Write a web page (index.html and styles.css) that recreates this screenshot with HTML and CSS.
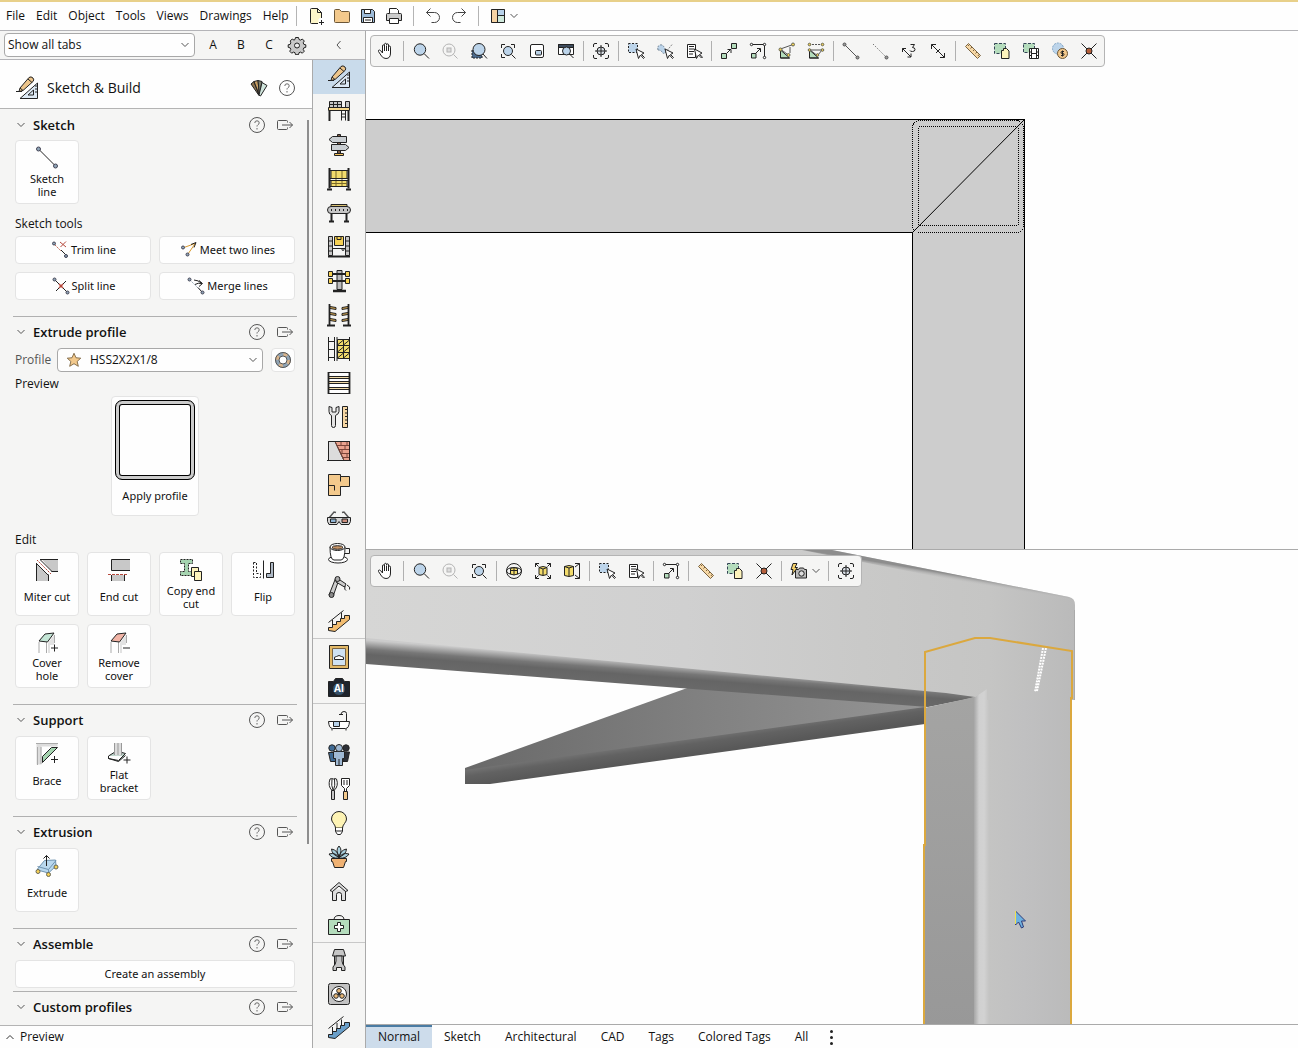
FILE: index.html
```html
<!DOCTYPE html>
<html lang="en">
<head>
<meta charset="utf-8">
<meta name="viewport" content="width=device-width, initial-scale=1">
<title>Sketch &amp; Build</title>
<link rel="stylesheet" href="styles.css">
</head>
<body>
<svg class="sprite" aria-hidden="true">
  <defs>
    <linearGradient id="g-front" gradientUnits="userSpaceOnUse" x1="366" y1="0" x2="1075" y2="0"><stop offset="0" stop-color="#d6d6d5"/><stop offset=".45" stop-color="#d0d0d0"/><stop offset=".7" stop-color="#c9c9c8"/><stop offset=".88" stop-color="#c5c5c4"/><stop offset="1" stop-color="#bababa"/></linearGradient>
    <linearGradient id="g-under" gradientUnits="userSpaceOnUse" x1="600" y1="658" x2="598" y2="684"><stop offset="0" stop-color="#cbcbcb"/><stop offset=".35" stop-color="#777"/><stop offset=".55" stop-color="#656565"/><stop offset="1" stop-color="#6a6a6a"/></linearGradient>
    <linearGradient id="g-top" gradientUnits="userSpaceOnUse" x1="950" y1="574" x2="949" y2="580"><stop offset="0" stop-color="#8d8d8d"/><stop offset="1" stop-color="#c6c6c6" stop-opacity="0"/></linearGradient>
    <linearGradient id="g-back" gradientUnits="userSpaceOnUse" x1="465" y1="0" x2="925" y2="0"><stop offset="0" stop-color="#696969"/><stop offset=".5" stop-color="#808080"/><stop offset="1" stop-color="#949494"/></linearGradient>
    <linearGradient id="g-backlow" gradientUnits="userSpaceOnUse" x1="700" y1="732" x2="703" y2="753"><stop offset="0" stop-color="#7e7e7e"/><stop offset=".5" stop-color="#626262"/><stop offset="1" stop-color="#585858"/></linearGradient>
    <linearGradient id="g-post" gradientUnits="userSpaceOnUse" x1="974" y1="0" x2="1075" y2="0"><stop offset="0" stop-color="#a6a6a6"/><stop offset=".05" stop-color="#d0d0d0"/><stop offset=".1" stop-color="#d2d2d2"/><stop offset=".15" stop-color="#c4c4c3"/><stop offset=".5" stop-color="#c0c0c1"/><stop offset="1" stop-color="#bababa"/></linearGradient>
    <linearGradient id="g-side" x1="0" y1="0" x2="0" y2="1"><stop offset="0" stop-color="#a4a4a3"/><stop offset="1" stop-color="#989898"/></linearGradient>
  </defs>

  <symbol id="new" viewBox="0 0 20 20"><path d="M5 3h6.500l4 4v4l-3 2v4.500H5z" fill="#fdf6c8" stroke="none"/><path d="M12 17.500H5.500q-1 0-1-1v-13q0-1 1-1h6l4 4V12M11.500 2.500v4h4M15.500 14v5M13 16.500h5"/></symbol>
  <symbol id="open" viewBox="0 0 20 20"><path d="M2.500 4.500q0-1 1-1h4l2 2h7q1 0 1 1v9q0 1-1 1h-13q-1 0-1-1z" fill="#f3c98c" stroke="#6b5637"/></symbol>
  <symbol id="save" viewBox="0 0 20 20"><path d="M3.500 3.500h11l2 2v11h-13z" fill="#9dbbd8"/><path d="M6.500 3.500h6v4h-6zM5.500 11.500h9v5h-9z" fill="#fff"/><path d="M7 14h6"/></symbol>
  <symbol id="print" viewBox="0 0 20 20"><path d="M2.500 8.500q0-1 1-1h13q1 0 1 1v6h-15z" fill="#ccc"/><path d="M5.500 7.500v-5h7l2 2v3M5.500 12.500h9v5h-9z" fill="#fff"/></symbol>
  <symbol id="undo" viewBox="0 0 20 20"><path d="M7.500 2.500l-4 4 4 4M3.500 6.500h8a5 5 0 0 1 0 10h-3" stroke="#444"/></symbol>
  <symbol id="redo" viewBox="0 0 20 20"><path d="M12.500 2.500l4 4-4 4M16.500 6.500h-8a5 5 0 0 0 0 10h3" stroke="#444"/></symbol>
  <symbol id="layout" viewBox="0 0 20 20"><path d="M3.500 3.500h6v13h-6z" fill="#f6d3a4"/><path d="M9.500 3.500h7v6h-7z" fill="#b8d2ea"/><path d="M9.500 9.500h7v7h-7z" fill="#cfe9dc"/><rect x="3.500" y="3.500" width="13" height="13" rx="1"/></symbol>
  <symbol id="down" viewBox="0 0 10 10"><path d="M1.500 3l3.500 3.500L8.500 3" stroke="#555"/></symbol>
  <symbol id="up" viewBox="0 0 10 10"><path d="M1.500 7L5 3.500 8.500 7" stroke="#333"/></symbol>
  <symbol id="left" viewBox="0 0 10 10"><path d="M6.500 1L3 5l3.500 4" stroke="#555"/></symbol>
  <symbol id="gear" viewBox="0 0 20 20"><path d="M8.500 2.500h3l.5 2 1.500.6 1.800-1.100 2 2-1.100 1.800.6 1.500 2 .5v2.500l-2 .6-.6 1.500 1.100 1.800-2 2-1.800-1.100-1.500.6-.5 2h-3l-.5-2-1.500-.6-1.800 1.100-2-2 1.100-1.800-.6-1.500-2-.6V9.800l2-.5.600-1.500L3.200 6l2-2L7 5.100l1-.6z" fill="#c9c9c9"/><circle cx="10" cy="10.500" r="2.500" fill="#eee"/></symbol>
  <symbol id="fan" viewBox="0 0 20 20"><path d="M2 6l3-2.500 5 14z" fill="#8a7350"/><path d="M5 3.500l4-1 1.500 15z" fill="#c79d62"/><path d="M9 2.500l4 1-2.500 14z" fill="#7b8070"/><path d="M13 4.500l5 3-6.500 10.500-1.500-1z" fill="#cfe5dc"/></symbol>
  <symbol id="help" viewBox="0 0 20 20"><circle cx="10" cy="10" r="7.500" stroke="#555"/><path d="M7.800 8q0-2.200 2.200-2.200t2.200 2q0 1.200-1.200 1.900-1 .6-1 1.800M10 13v1.500" stroke="#666"/></symbol>
  <symbol id="exit" viewBox="0 0 20 20"><path d="M12.500 7.500v-1q0-1-1-1h-8q-1 0-1 1v7q0 1 1 1h8q1 0 1-1v-1M7 10h10.500M14.500 7l3 3-3 3" stroke="#555"/></symbol>

  <symbol id="hand" viewBox="0 0 20 20"><path d="M6.500 11V5q0-1.200 1-1.200t1 1.200V3.500q0-1.200 1-1.200t1 1.200V4q0-1.200 1-1.200t1 1.200v2q0-1 1-1t1 1.200V12q0 5.500-4.500 5.500-3 0-4.500-2.500l-3-4.500q-.5-1.500 1-1.500 1 0 3 3zM8.500 5v5M10.500 4.500V10M12.500 5.500V10" fill="#fff"/></symbol>
  <symbol id="zoom" viewBox="0 0 20 20"><circle cx="9" cy="8.500" r="5.700" fill="#bcd4ea"/><path d="M13 12.500l5 5"/></symbol>
  <symbol id="zoomoff" viewBox="0 0 20 20"><g stroke="#b4b4b4"><circle cx="9" cy="9" r="6"/><rect x="7" y="7" width="4" height="4" fill="#ddd"/><path d="M13.500 13.500l4 4"/></g></symbol>
  <symbol id="zoomback" viewBox="0 0 20 20"><path d="M3 9v8h10v-4z" fill="#4b6a8c" stroke-dasharray="2 1"/><circle cx="10" cy="8.500" r="6" fill="#bcd4ea"/><path d="M14 13l4 4.500"/></symbol>
  <symbol id="zoomfit" viewBox="0 0 20 20"><path d="M3.500 7V3.500H7M13 3.500h3.500V7M3.500 13v3.500H7"/><circle cx="10" cy="10" r="4.500" fill="#bcd4ea"/><path d="M13.500 13.500l4 4"/></symbol>
  <symbol id="minimap" viewBox="0 0 20 20"><rect x="3.500" y="3.500" width="13" height="13" rx="1.500" fill="#fff"/><rect x="8.500" y="9.500" width="6" height="4.500" rx="1" fill="#bcd4ea"/></symbol>
  <symbol id="zoomwin" viewBox="0 0 20 20"><path d="M2.500 3.500h15v10h-15z" fill="#fff"/><path d="M2.500 3.500h15v3h-15z" fill="#3d4b5c"/><circle cx="10.500" cy="10" r="4" fill="#bcd4ea"/><path d="M13.500 13l4 4"/></symbol>
  <symbol id="target" viewBox="0 0 20 20"><path d="M2.500 6V4q0-1.500 1.500-1.500h2M14 2.500h2q1.500 0 1.500 1.500v2M17.500 14v2q0 1.500-1.500 1.500h-2M6 17.500H4q-1.500 0-1.500-1.500v-2"/><circle cx="10" cy="10" r="4" fill="#d7dde4"/><path d="M10 4v12M4 10h12"/></symbol>
  <symbol id="selbox" viewBox="0 0 20 20"><path d="M2.500 2.500h9v9h-9z" fill="#bcd4ea" stroke-dasharray="2 1.500"/><path d="M10 8l2.500 9.500 2-3.500 3 3.500 1-1-3-3 2.500-1.500z" fill="#fff"/></symbol>
  <symbol id="sellasso" viewBox="0 0 20 20"><path d="M3 9q-1-4 2-5t5 4q2 3 0 4t-3-1-4-2z" fill="#bcd4ea" stroke="#789" stroke-dasharray="2 1"/><path d="M10 12l7.500-9" stroke="#888" stroke-dasharray="2 1"/><path d="M10 8l2.500 9.500 2-3.500 3 3.500 1-1-3-3 2.500-1.500z" fill="#fff"/></symbol>
  <symbol id="sellist" viewBox="0 0 20 20"><path d="M3.500 3.500h8v13h-8z" fill="#fff"/><path d="M5 5.500h5M5 8h5M5 10.500h5M5 13h4"/><path d="M10.500 8l2 9.500 2-3.500 3 3 1-1-3-2.500 2.500-1.500z" fill="#fff"/></symbol>
  <symbol id="scale2" viewBox="0 0 20 20"><path d="M2.500 12.500h5v5h-5zM12.500 2.500h5v5h-5z" fill="#b4dcbc"/><path d="M8 12l4-4M8.500 8.500H12V12"/></symbol>
  <symbol id="stretch" viewBox="0 0 20 20"><path d="M3.500 3.500h13v13"/><path d="M3.500 12.500h4.500v4.500H3.500z" fill="#b4dcbc"/><path d="M8 12l4-4M9 7.500h3.500V11"/><g fill="#fff"><circle cx="3.500" cy="3.500" r="1.200"/><circle cx="16.500" cy="3.500" r="1.200"/><circle cx="16.500" cy="16.500" r="1.200"/></g></symbol>
  <symbol id="rot" viewBox="0 0 20 20"><path d="M3.500 9v8h9z" fill="#b4dcbc"/><path d="M3.500 8L16 3.500M4 8.500l8 6M13 6v6" stroke="#555"/><path d="M3.500 17h9"/><g fill="#f2d155" stroke="#665"><circle cx="3.500" cy="8.500" r="1.500"/><circle cx="16" cy="3.500" r="1.500"/><circle cx="11.500" cy="14" r="1.500"/></g></symbol>
  <symbol id="rot2" viewBox="0 0 20 20"><path d="M3.500 9v8h9z" fill="#b4dcbc"/><path d="M3 3.500h14" stroke="#555" stroke-dasharray="2 1"/><path d="M3 9h14M4 9l8 6M16 9l-4 5" stroke="#555"/><path d="M3.500 17h9"/><g fill="#f2d155" stroke="#665"><circle cx="3.500" cy="3.500" r="1.300"/><circle cx="16.500" cy="3.500" r="1.300"/><circle cx="3.500" cy="9" r="1.300"/><circle cx="16.500" cy="9" r="1.300"/><circle cx="11.500" cy="14" r="1.300"/></g></symbol>
  <symbol id="line" viewBox="0 0 20 20"><path d="M4 4l12 12" stroke="#555"/><g fill="#9a9a9a" stroke="#555"><circle cx="3.500" cy="3.500" r="1.500"/><circle cx="16.500" cy="16.500" r="1.500"/></g></symbol>
  <symbol id="line2" viewBox="0 0 20 20"><path d="M3 3l13 13" stroke="#777" stroke-dasharray="1.500 1.500"/><circle cx="16.500" cy="16.500" r="1.500" fill="#9a9a9a" stroke="#555"/></symbol>
  <symbol id="dim3" viewBox="0 0 20 20"><path d="M3.500 7.500l8.500 8.500M3.500 11V7.500H7M12 12.500V16H8.500"/><path d="M11.500 3.500h4l-2 3q2.500 0 2.500 2t-2.500 2-2.500-1"/></symbol>
  <symbol id="dim" viewBox="0 0 20 20"><path d="M3.500 3.500l13 13M3.500 8V3.500H8M16.500 12v4.500H12M8 12l4-4"/></symbol>
  <symbol id="ruler" viewBox="0 0 20 20"><path d="M2.500 5.500l3-3 12 12-3 3z" fill="#f6d7a4" stroke="#7a6442"/><path d="M6.500 3.500l-1.500 1.500M9 6L7.500 7.500M11.500 8.500L10 10M14 11l-1.500 1.500M16 13.500L15 15" stroke="#7a6442"/></symbol>
  <symbol id="copybox" viewBox="0 0 20 20"><path d="M2.500 2.500h11v10h-11z" fill="#b4dcbc" stroke-dasharray="3 1.500" stroke="#345"/><path d="M9.500 9.500h2v-2h3l2.500 2.500v7.500h-7.500z" fill="#fdf3bc"/></symbol>
  <symbol id="film" viewBox="0 0 20 20"><path d="M2.500 2.500h11v9h-11z" fill="#b4dcbc" stroke-dasharray="3 1.500" stroke="#345"/><path d="M8.500 7.500h9v10h-9z" fill="#fff"/><path d="M10.500 7v11M15.500 7v11M8.500 11h2M8.500 14.500h2M15.500 11h2M15.500 14.500h2M10.500 12.500h5"/></symbol>
  <symbol id="money" viewBox="0 0 20 20"><circle cx="8" cy="7.500" r="5.500" fill="#bcd4ea" stroke="#7ea3c4" stroke-dasharray="2 1"/><circle cx="12.500" cy="12.500" r="5" fill="#f3c98c" stroke="#6b5637"/><path d="M14 10.500h-2q-1 0-1 1t1 1h1q1 0 1 1t-1 1h-2M12.500 9.500v6"/></symbol>
  <symbol id="burst" viewBox="0 0 20 20"><path d="M2.500 2.500l15 15M17.500 2.500l-15 15"/><circle cx="10" cy="10" r="3" fill="#b5603c"/></symbol>
  <symbol id="orbit" viewBox="0 0 20 20"><circle cx="10" cy="10" r="7.500"/><ellipse cx="10" cy="10" rx="7.500" ry="3.500"/><path d="M6.500 7.500q3.500-2 7 0v5.500q-3.500 2-7 0z" fill="#f3dc6c"/><path d="M10 6.500V14M6.500 9.500h7"/></symbol>
  <symbol id="cubefit" viewBox="0 0 20 20"><path d="M2.500 6V2.500H6M14 2.500h3.500V6M17.500 14v3.500H14M6 17.500H2.500V14M2.500 2.500l3 3M17.500 2.500l-3 3M17.500 17.500l-3-3M2.500 17.500l3-3"/><path d="M6 6.500q4-2 8 0v7q-4 2-8 0z" fill="#f3dc6c"/><path d="M6 6.500l4 1.500 4-1.500M10 8v6.500"/></symbol>
  <symbol id="cubeh" viewBox="0 0 20 20"><path d="M2.500 5.500q4.500-2 9 0v9q-4.500 2-9 0z" fill="#f3dc6c"/><path d="M2.500 5.500L7 7l4.500-1.500M7 7v8.500M13 2.500h4.500v15H13M17.500 2.500L13 6M17.500 17.500L13 14"/></symbol>
  <symbol id="flash" viewBox="0 0 20 20"><path d="M6.500 8.500h3l1-1.500h4l1 1.500h2v8.500h-11z" fill="#bbb"/><circle cx="12.500" cy="12.500" r="2.700" fill="#ddd"/><path d="M4 2.500h4L6 6.500h2.500L3 14l1-5.500H2z" fill="#f6d26a"/></symbol>

  <symbol id="sb" viewBox="0 0 24 24"><path d="M5 22.500L22.500 7v15.500z" fill="#dde9f4"/><path d="M13 19l5.500-5v5zM20 10h2M20 13h2M20 16h2M1 15.500h6"/><path d="M5 12l9-10.500q2-1.500 4 .5 1.500 2 0 3.500L8 14.500l-4 1z" fill="#edc58b"/><path d="M5 12l3 2.500M13 3l4 3.500"/></symbol>
  <symbol id="r-mezz" viewBox="0 0 24 24"><path d="M2.500 2.500h12v6h-12zM18.500 2.500h4v6h-4z" fill="#c6c6c6"/><path d="M6.500 2.500v6M10.500 2.500v6M2.500 5.500h12"/><path d="M1.500 8.500h21v3h-21z" fill="#f6d78a"/><path d="M2.500 12v10M21.500 12v10" stroke-width="2"/><path d="M14.500 12v9.500M18.500 12v9.500M14.500 15h4M14.500 18h4"/></symbol>
  <symbol id="r-sign" viewBox="0 0 24 24"><path d="M10.500 1.500h3v20h-3z" fill="#7d5a44"/><path d="M5.500 3.500h14v6h-14l-3.500-3zM4.500 11.500h14l3.500 3-3.500 3h-14z" fill="#c9ced2"/><path d="M7.500 20.500h9v2h-9z" fill="#f6c35c"/></symbol>
  <symbol id="r-rack" viewBox="0 0 24 24"><path d="M4 3.500h16v8H4zM4 13.500h16v6H4z" fill="#f3dc6c"/><path d="M9 3.500v16M15 3.500v16M4 16.500h16" stroke="#7a6a2a"/><path d="M2.500 1v20.500M21.500 1v20.500" stroke-width="2"/><path d="M2.500 3.500h19M2.500 11.500h19M2.500 13.500h19M2.500 19.500h19"/><path d="M0 22.500h5M19 22.500h5" stroke-width="2"/></symbol>
  <symbol id="r-conv" viewBox="0 0 24 24"><path d="M4 3.500h16v3H4z" fill="#d8c070"/><rect x=".5" y="5.500" width="23" height="7" rx="3.500" fill="#c6c6c6"/><path d="M4 9h1M8 9h1M12 9h1M16 9h1M20 9h1M4.500 13v7M19.500 13v7M2 20.500h5M17 20.500h5" stroke-width="2"/></symbol>
  <symbol id="r-dock" viewBox="0 0 24 24"><path d="M1.500 1.500h4v19h-4zM18.500 1.500h4v19h-4z" fill="#c6c6c6"/><path d="M7.500 1.500h9v9h-9z" fill="#f6d155"/><path d="M10 1.500v3h4v-3M5.500 13.500h13M1.500 6h4M1.500 11h4M1.500 16h4M18.500 6h4M18.500 11h4M18.500 16h4"/><path d="M1 21.500h22" stroke-width="2"/><circle cx="16" cy="14.500" r="1"/></symbol>
  <symbol id="r-cant" viewBox="0 0 24 24"><path d="M10 1.500h5v19h-5z" fill="#bbb"/><path d="M5 5h14M5 12h14" stroke-width="2"/><path d="M1.500 2.500h4v5h-4zM18.500 2.500h4v5h-4zM1.500 9.500h4v5h-4zM18.500 9.500h4v5h-4z" fill="#f6d155"/><path d="M6 22h13" stroke-width="2.500"/></symbol>
  <symbol id="r-arms" viewBox="0 0 24 24"><path d="M2.500 1v21M21.500 1v21" stroke-width="1.800"/><path d="M0 22.500h8M16 22.500h8" stroke-width="2"/><path d="M3 3.500l6 1v2l-6-1zM3 9.500l6 1v2l-6-1zM3 15.500l6 1v2l-6-1zM21 3.500l-6 1v2l6-1zM21 9.500l-6 1v2l6-1zM21 15.500l-6 1v2l6-1z" fill="#d9a94e"/></symbol>
  <symbol id="r-cage" viewBox="0 0 24 24"><path d="M1.500 0v24M7.500 0v24M1.500 4.500h6M1.500 12.500h6M1.500 20.500h6"/><path d="M10.500 2.500h12v19h-12z" fill="#f3dc6c"/><path d="M16.500 2.500v19M10.500 8.500h12M10.500 15.500h12M10.500 8l6-5M16.500 8l6-5M10.500 15l6-5M16.500 15l6-5M10.500 21l6-5M16.500 21l6-5M10 0v24M22.500 0v24"/></symbol>
  <symbol id="r-shelf" viewBox="0 0 24 24"><path d="M1.500 1.500h21v21h-21z" fill="#fff"/><path d="M1.500 5.500h21v2h-21zM1.500 10.500h21v2h-21zM1.500 16.500h21v2h-21z" fill="#f3dca8"/><path d="M2 6.500h20M2 11.500h20M2 17.500h20" stroke="#f3dca8"/><path d="M1.500 1v22M22.500 1v22" stroke-width="1.800"/></symbol>
  <symbol id="r-tools" viewBox="0 0 24 24"><path d="M2 1.500v5q0 3 2.500 4v10q0 2 2 2t2-2v-10Q12 9 12 6.500v-5l-3 1v4.500H5V2.500z" fill="#e4e4e4"/><path d="M15.500 1.500h5v21h-5z" fill="#f6d7a4"/><path d="M18 4.500h2.500M18 8h2.500M18 11.500h2.500M18 15h2.500M18 18.500h2.500"/></symbol>
  <symbol id="r-wall" viewBox="0 0 24 24"><path d="M1.500 2.500h21v19h-21z" fill="#dcdcdc"/><path d="M8 2.500h14.500v19H17z" fill="#e9a28e"/><path d="M10 6.500h12.500M12 10.500h10.500M14 14.500h8.500M15.500 18.500h7M14 2.500v4M18 6.500v4M15 10.500v4M20 14.500v4M20 2.500v4M8 2.500l9 19" stroke="#7a4438"/><path d="M1.500 2.500h21v19h-21zM0 21.500h24"/></symbol>
  <symbol id="r-plan" viewBox="0 0 24 24"><path d="M1.500 1.500h12v2h9v10h-9v9h-12z" fill="#f3c98c"/><path d="M13.500 3.500v5M1.500 12.500h6v5M13.500 13.500v3"/></symbol>
  <symbol id="r-3d" viewBox="0 0 24 24"><path d="M2 11l5-6 2 .5M22 11l-5-6-2 .5" stroke="#555" stroke-width="1.500"/><path d="M.5 10.500h23v4l-1.500 3h-8l-2-3-2 3H2l-1.500-3z" fill="#d4d4d4"/><path d="M3.500 12h5.500v3.500H3.500z" fill="#8fb4d4"/><path d="M15 12h5.500v3.500H15z" fill="#c98b7a"/></symbol>
  <symbol id="r-cup" viewBox="0 0 24 24"><ellipse cx="11" cy="18.500" rx="9.500" ry="3.500" fill="#fff"/><path d="M3 6q0 13 4 13h7q4 0 4-13z" fill="#fff"/><ellipse cx="10.500" cy="6" rx="7.500" ry="3.500" fill="#fff"/><ellipse cx="10.500" cy="6.500" rx="5.500" ry="1.800" fill="#c79466"/><path d="M18.500 7.500h4v5h-5"/></symbol>
  <symbol id="r-robot" viewBox="0 0 24 24"><path d="M2 20L8.500 3.500l4-.5L6 21.500z" fill="#ccc"/><path d="M10 3l9 6-1.500 3L9 7z" fill="#ccc"/><circle cx="10.500" cy="4" r="2.500" fill="#aaa"/><circle cx="4.500" cy="20" r="2.500" fill="#888"/><path d="M18 11q-1 4 1 4.500M20 10q4 2 2.500 4.500"/></symbol>
  <symbol id="r-stair" viewBox="0 0 24 24"><path d="M1.500 21.500v-3h4v-3h4v-3h4v-3h4v-3h5v4L8 22.500z" fill="#f3bd70"/><path d="M1.500 13.500l15-12M5.500 11v5M14.500 3.500v6"/></symbol>
  <symbol id="r-stairb" viewBox="0 0 24 24"><path d="M1.500 21.500v-3h4v-3h4v-3h4v-3h4v-3h5v4L8 22.500z" fill="#6a9fc9"/><path d="M1.500 12.500l15-12M5.500 11v6M10 7v6M14.500 3.500v6"/></symbol>
  <symbol id="r-frame" viewBox="0 0 24 24"><path d="M2.500 .5h19v23h-19z" fill="#e2b968"/><path d="M5.500 3.500h13v17h-13z" fill="#cfe2f3" stroke="#7a6442"/><path d="M7.500 14.500q-1-3 2-3 2.500-2 5 0 3 0 2 3z" fill="#fff"/></symbol>
  <symbol id="r-ai" viewBox="0 0 24 24"><path d="M1.500 5.500h5l2-3h7l2 3h5v15h-21z" fill="#1d232c"/><circle cx="12" cy="13" r="6.500" fill="#34506a"/></symbol>
  <symbol id="r-bath" viewBox="0 0 24 24"><path d="M1.500 12.500h21q-.5 7-4 7h-13q-3.500 0-4-7z" fill="#fff"/><path d="M6.500 12.500h6v5h-6z" fill="#b8d2ea"/><path d="M19.500 12V4.500q0-2-2.500-2t-3 2.500M12 5.500h4M5 20v1.500M19 20v1.500"/></symbol>
  <symbol id="r-people" viewBox="0 0 24 24"><path d="M1.500 9.500h7v9h-5z" fill="#3f6a94"/><circle cx="5" cy="5" r="3.200" fill="#3f6a94"/><circle cx="19" cy="5" r="3.200" fill="#2c2f36"/><path d="M16 9h6.500l-2 9.500H16z" fill="#2c2f36"/><path d="M6.500 8.500h11v7h-2v7h-7v-7h-2z" fill="#9fb9d4"/><circle cx="12" cy="5" r="3.500" fill="#9fb9d4"/><path d="M12 16v6"/></symbol>
  <symbol id="r-utensil" viewBox="0 0 24 24"><path d="M3 2q-2.500 7 2 11.500h2Q12 9 9.500 2q-2-1-3 0-2-1-3.500 0zM5 2q-1 7 1 11M7.500 2q1 7-1 11" fill="#fff"/><path d="M4.500 13.500h3v9h-3z" fill="#c6c6c6"/><path d="M14.500 1.500h8v7l-3 3v3h-2v-3l-3-3z" fill="#fff"/><path d="M17 3v5M20 3v5"/><path d="M16.500 14.500h4v8h-4z" fill="#f3c98c"/></symbol>
  <symbol id="r-bulb" viewBox="0 0 24 24"><path d="M8.500 17q0-2-2-4.500Q4.500 10 4.500 8a7.500 7.500 0 0 1 15 0q0 2-2 4.500-2 2.500-2 4.500z" fill="#fdf3b4"/><path d="M8.500 17v3.500l2 3h3l2-3V17M8.500 20h7" fill="#fff"/></symbol>
  <symbol id="r-plant" viewBox="0 0 24 24"><path d="M12 12Q8 5 12 1q4 4 0 11zM12 12Q5 10 4.500 4q6 1 7.500 8zM12 12q7-2 7.500-8-6 1-7.500 8zM12 13Q5 14 2 9q7-2 10 4zM12 13q7 1 10-4-7-2-10 4z" fill="#a9cfdc"/><path d="M4.500 13.500h15v3h-1l-2 6h-9l-2-6h-1z" fill="#f0b273"/></symbol>
  <symbol id="r-home" viewBox="0 0 24 24"><path d="M5.500 10.500v11h4v-6q0-2 2.500-2t2.500 2v6h4v-11" fill="#dedede"/><path d="M3 11.500l9-8 9 8-2.500 1L12 7l-6.500 5.500z" fill="#dedede"/></symbol>
  <symbol id="r-aid" viewBox="0 0 24 24"><path d="M7 7q0-4.500 5-4.500T17 7"/><path d="M1.500 6.500h21v15h-21z" fill="#b4dcbc"/><path d="M10.500 9.500h3v3h3v3h-3v3h-3v-3h-3v-3h3z" fill="#fff"/></symbol>
  <symbol id="r-press" viewBox="0 0 24 24"><path d="M7.500 1.500h9l2 6.500h-13z" fill="#c6c6c6"/><path d="M9 8h6v5q0 3 3 6v3.500h-3.500v-3h-5v3H6V19q3-3 3-6z" fill="#c6c6c6"/><path d="M7.500 8v9M16.500 8v9"/></symbol>
  <symbol id="r-fan" viewBox="0 0 24 24"><rect x="1.500" y="1.500" width="21" height="21" rx="2" fill="#c2c2c2"/><circle cx="12" cy="12" r="7.500" fill="#fff"/><g fill="#e8b878"><circle cx="12" cy="8.800" r="2.300"/><circle cx="9" cy="14" r="2.300"/><circle cx="15" cy="14" r="2.300"/></g><circle cx="12" cy="12" r="1" fill="#222"/></symbol>

  <symbol id="c-line" viewBox="0 0 24 24"><path d="M4 3.500l16 16"/><g fill="#8fa5b8" stroke="#445"><circle cx="3.500" cy="3" r="2"/><circle cx="20.500" cy="20" r="2"/></g></symbol>
  <symbol id="c-miter" viewBox="0 0 24 24"><path d="M7 1.500h16v12h-6z" fill="#c8c8c8" stroke="none"/><path d="M1.500 6v17h12v-6z" fill="#c8c8c8" stroke="none"/><path d="M5 1.500h18M16.500 13.500H23M1.500 5v18M13.500 16.500V23M5.500 2l12 12M1.500 5.500L14 18"/><path d="M2 2l14 14" stroke="#b5483c" stroke-dasharray="2 1"/></symbol>
  <symbol id="c-end" viewBox="0 0 24 24"><path d="M23 1.500H4.500v11H23" fill="#c8c8c8"/><path d="M5 17h13v6H5z" fill="#c8c8c8" stroke="none"/><path d="M4.500 17v6M17.500 17v6"/><path d="M1 16.500h19" stroke="#b5483c" stroke-dasharray="3 1"/></symbol>
  <symbol id="c-copy" viewBox="0 0 24 24"><path d="M1.500 1.500h12v4h-4v8h4v4h-12v-4h4v-8h-4z" fill="#a5d4b0" stroke-dasharray="2 1"/><path d="M12.500 9.500h7v9h-7z" fill="#fdf3bc"/><path d="M15.500 13.500h7v9h-7z" fill="#fdf3bc"/></symbol>
  <symbol id="c-flip" viewBox="0 0 24 24"><path d="M2.500 4.500h3v11h4v4h-7z" stroke-dasharray="2 1.500"/><path d="M12.500 2.500v18"/><path d="M22.500 4.500h-3v11h-4v4h7z" fill="#aeb9c6"/></symbol>
  <symbol id="c-cover" viewBox="0 0 24 24"><path d="M4 12v11h9V13l6-8v10h-4v8H4z" fill="#e2e2e2" stroke="none"/><path d="M4 12v11M11.500 12v11M19.500 5v8" stroke="#aaa"/><path d="M4 11l6-7 9-1-6.500 9z" fill="#c4e6d6"/><path d="M19.500 14.500v7M16 18h7"/></symbol>
  <symbol id="c-remove" viewBox="0 0 24 24"><path d="M4 12v11h9V13l6-8v10h-4v8H4z" fill="#e2e2e2" stroke="none"/><path d="M4 12v11M11.500 12v11M19.500 5v8" stroke="#aaa"/><path d="M4 11l6-7 9-1-6.500 9z" fill="#f2b4a6"/><path d="M16 18h7"/></symbol>
  <symbol id="c-brace" viewBox="0 0 24 24"><path d="M1.500 1.500h21v3h-16v18h-5z" fill="#dcdcdc" stroke="none"/><path d="M1 1.500h22M2.500 5v18M6 5v17" stroke="#aaa"/><path d="M7.500 14.500l9-9h6L7.500 20.500z" fill="#a5d4b0"/><path d="M19.500 14v7M16 17.500h7"/></symbol>
  <symbol id="c-flat" viewBox="0 0 24 24"><path d="M1.500 14l8-5 9 2.500-7 7-10-2zM1.500 14v2.500l10 3 7-6" fill="#b7cfc5"/><path d="M7.500 1h7v12h-7z" fill="#dcdcdc" stroke="none"/><path d="M7.500 1v12M11 1v12M14.500 1v12" stroke="#999"/><path d="M20 14.500v7M16.500 18h7"/></symbol>
  <symbol id="c-extrude" viewBox="0 0 24 24"><path d="M2.500 15l7-8.500 11-.5.500 6-7.500 7-11-3z" fill="#b9d8ee" stroke="#6f93b0"/><path d="M2.500 12.500l11 3 7.500-9M13.500 15.500v4" stroke="#6f93b0"/><path d="M11.500 12V1.500M8.500 4.500l3-3 3 3"/><g fill="#f6d155" stroke="#665"><circle cx="3" cy="17.500" r="2"/><circle cx="13.500" cy="20.500" r="2"/><circle cx="21" cy="13" r="2"/></g></symbol>

  <symbol id="t-trim" viewBox="0 0 20 20"><path d="M11 10l6 6"/><path d="M5 5l6 6" stroke="#c46a55" stroke-dasharray="2 1"/><path d="M10 2l6 5M16 1.500L10.500 7" stroke="#b5483c"/><g fill="#8fa5b8" stroke="#445"><circle cx="4" cy="3.500" r="1.500"/><circle cx="16" cy="16" r="1.500"/></g></symbol>
  <symbol id="t-meet" viewBox="0 0 20 20"><path d="M5 7.500l11-4M9 14l7.500-11" stroke="#d9992f"/><path d="M12 4.500l5-2-2 5"/><g fill="#8fa5b8" stroke="#445"><circle cx="4" cy="7.500" r="1.500"/><circle cx="8.500" cy="14.500" r="1.500"/></g></symbol>
  <symbol id="t-split" viewBox="0 0 20 20"><path d="M4 4l12 12M15 5L5 15"/><path d="M8 8l4 4M12 8l-4 4" stroke="#b5483c" stroke-width="1.500"/><g fill="#8fa5b8" stroke="#445"><circle cx="3.500" cy="3.500" r="1.500"/><circle cx="16.500" cy="16.500" r="1.500"/></g></symbol>
  <symbol id="t-merge" viewBox="0 0 20 20"><path d="M4 4l12 12" stroke="#9ab" stroke-dasharray="2 1"/><path d="M12 11.500l4 4.500M8 4q4 0 8 3.500M13 4.500l3.500 3-3.500 3M9 8.500q3-2 7-1"/><g fill="#8fa5b8" stroke="#445"><circle cx="3.500" cy="3.500" r="1.500"/><circle cx="16.500" cy="16.500" r="1.500"/></g></symbol>
  <symbol id="star" viewBox="0 0 20 20"><path d="M10 2.500l2.200 5 5.300.5-4 3.600 1.300 5.400-4.800-2.900L5.200 17l1.300-5.400-4-3.600 5.300-.5z" fill="#f3c98c" stroke="#7a6442"/></symbol>
  <symbol id="ring" viewBox="0 0 20 20"><g stroke-width="4"><circle cx="10" cy="10" r="5.800" stroke="#8fa3b4"/><circle cx="10" cy="10" r="5.800" stroke="#d8b48c" stroke-dasharray="4 5"/></g><g stroke="#555"><circle cx="10" cy="10" r="7.500"/><circle cx="10" cy="10" r="4" fill="#fff"/></g></symbol>
</svg>

<div class="app">
  <header class="menubar">
    <nav class="menus" aria-label="Main menu">
      <button>File</button><button>Edit</button><button>Object</button><button>Tools</button><button>Views</button><button>Drawings</button><button>Help</button>
    </nav>
    <div class="quick">
      <button aria-label="New"><svg><use href="#new"/></svg></button>
      <button aria-label="Open"><svg><use href="#open"/></svg></button>
      <button aria-label="Save"><svg><use href="#save"/></svg></button>
      <button aria-label="Print"><svg><use href="#print"/></svg></button>
    </div>
    <div class="quick">
      <button aria-label="Undo"><svg><use href="#undo"/></svg></button>
      <button aria-label="Redo"><svg><use href="#redo"/></svg></button>
    </div>
    <div class="quick">
      <button class="split" aria-label="Layout"><svg><use href="#layout"/></svg><svg class="mini"><use href="#down"/></svg></button>
    </div>
  </header>

  <div class="work">
    <aside class="side">
      <div class="filter">
        <div class="drop tabs-drop"><select aria-label="Tabs shown"><option>Show all tabs</option></select><svg class="mini"><use href="#down"/></svg></div>
        <button>A</button><button>B</button><button>C</button>
        <button aria-label="Settings"><svg><use href="#gear"/></svg></button>
        <button class="collapse" aria-label="Collapse"><svg class="mini"><use href="#left"/></svg></button>
      </div>
      <div class="side-main">
        <div class="panel">
          <div class="panel-head">
            <svg class="big"><use href="#sb"/></svg>
            <h1>Sketch &amp; Build</h1>
            <button aria-label="Materials"><svg><use href="#fan"/></svg></button>
            <button aria-label="Help"><svg><use href="#help"/></svg></button>
          </div>
          <div class="panel-body">
            <section>
              <div class="sec-head"><svg class="mini"><use href="#down"/></svg><h2>Sketch</h2><button aria-label="Help"><svg><use href="#help"/></svg></button><button aria-label="Detach"><svg><use href="#exit"/></svg></button></div>
              <div class="cards"><button class="card"><svg class="big"><use href="#c-line"/></svg><span>Sketch line</span></button></div>
              <h3>Sketch tools</h3>
              <div class="pairs">
                <button><svg><use href="#t-trim"/></svg>Trim line</button>
                <button><svg><use href="#t-meet"/></svg>Meet two lines</button>
                <button><svg><use href="#t-split"/></svg>Split line</button>
                <button><svg><use href="#t-merge"/></svg>Merge lines</button>
              </div>
            </section>
            <section>
              <div class="sec-head"><svg class="mini"><use href="#down"/></svg><h2>Extrude profile</h2><button aria-label="Help"><svg><use href="#help"/></svg></button><button aria-label="Detach"><svg><use href="#exit"/></svg></button></div>
              <div class="profile">
                <label for="profile">Profile</label>
                <div class="drop"><svg class="star"><use href="#star"/></svg><select id="profile"><option>HSS2X2X1/8</option></select><svg class="mini"><use href="#down"/></svg></div>
                <button aria-label="Profile library"><svg><use href="#ring"/></svg></button>
              </div>
              <h3 class="tight">Preview</h3>
              <button class="apply"><span class="tube"></span><span>Apply profile</span></button>
              <h3 class="loose">Edit</h3>
              <div class="cards">
                <button class="card"><svg class="big"><use href="#c-miter"/></svg><span>Miter cut</span></button>
                <button class="card"><svg class="big"><use href="#c-end"/></svg><span>End cut</span></button>
                <button class="card"><svg class="big"><use href="#c-copy"/></svg><span>Copy end cut</span></button>
                <button class="card"><svg class="big"><use href="#c-flip"/></svg><span>Flip</span></button>
                <button class="card"><svg class="big"><use href="#c-cover"/></svg><span>Cover hole</span></button>
                <button class="card"><svg class="big"><use href="#c-remove"/></svg><span>Remove cover</span></button>
              </div>
            </section>
            <section>
              <div class="sec-head"><svg class="mini"><use href="#down"/></svg><h2>Support</h2><button aria-label="Help"><svg><use href="#help"/></svg></button><button aria-label="Detach"><svg><use href="#exit"/></svg></button></div>
              <div class="cards">
                <button class="card"><svg class="big"><use href="#c-brace"/></svg><span>Brace</span></button>
                <button class="card"><svg class="big"><use href="#c-flat"/></svg><span>Flat bracket</span></button>
              </div>
            </section>
            <section>
              <div class="sec-head"><svg class="mini"><use href="#down"/></svg><h2>Extrusion</h2><button aria-label="Help"><svg><use href="#help"/></svg></button><button aria-label="Detach"><svg><use href="#exit"/></svg></button></div>
              <div class="cards"><button class="card"><svg class="big"><use href="#c-extrude"/></svg><span>Extrude</span></button></div>
            </section>
            <section class="short">
              <div class="sec-head"><svg class="mini"><use href="#down"/></svg><h2>Assemble</h2><button aria-label="Help"><svg><use href="#help"/></svg></button><button aria-label="Detach"><svg><use href="#exit"/></svg></button></div>
              <button class="wide">Create an assembly</button>
            </section>
            <section class="short">
              <div class="sec-head"><svg class="mini"><use href="#down"/></svg><h2>Custom profiles</h2><button aria-label="Help"><svg><use href="#help"/></svg></button><button aria-label="Detach"><svg><use href="#exit"/></svg></button></div>
            </section>
            <div class="thumb"></div>
          </div>
          <button class="panel-foot"><svg class="mini"><use href="#up"/></svg>Preview</button>
        </div>
        <nav class="rail" aria-label="Catalog tabs">
          <div class="group">
            <button class="on" aria-label="Sketch and build"><svg><use href="#sb"/></svg></button>
            <button aria-label="Mezzanine"><svg><use href="#r-mezz"/></svg></button>
            <button aria-label="Signs"><svg><use href="#r-sign"/></svg></button>
            <button aria-label="Pallet rack"><svg><use href="#r-rack"/></svg></button>
            <button aria-label="Conveyor"><svg><use href="#r-conv"/></svg></button>
            <button aria-label="Drive-in rack"><svg><use href="#r-dock"/></svg></button>
            <button aria-label="Cantilever"><svg><use href="#r-cant"/></svg></button>
            <button aria-label="Arm rack"><svg><use href="#r-arms"/></svg></button>
            <button aria-label="Mesh"><svg><use href="#r-cage"/></svg></button>
            <button aria-label="Shelving"><svg><use href="#r-shelf"/></svg></button>
            <button aria-label="Tools"><svg><use href="#r-tools"/></svg></button>
            <button aria-label="Walls"><svg><use href="#r-wall"/></svg></button>
            <button aria-label="Floors"><svg><use href="#r-plan"/></svg></button>
            <button aria-label="3D"><svg><use href="#r-3d"/></svg></button>
            <button aria-label="Break room"><svg><use href="#r-cup"/></svg></button>
            <button aria-label="Robots"><svg><use href="#r-robot"/></svg></button>
            <button aria-label="Stairs"><svg><use href="#r-stair"/></svg></button>
          </div>
          <div class="group compact">
            <button aria-label="Rendering"><svg><use href="#r-frame"/></svg></button>
            <button class="ai" aria-label="AI rendering"><svg><use href="#r-ai"/></svg><span>AI</span></button>
          </div>
          <div class="group">
            <button aria-label="Bathroom"><svg><use href="#r-bath"/></svg></button>
            <button aria-label="People"><svg><use href="#r-people"/></svg></button>
            <button aria-label="Kitchen"><svg><use href="#r-utensil"/></svg></button>
            <button aria-label="Lighting"><svg><use href="#r-bulb"/></svg></button>
            <button aria-label="Plants"><svg><use href="#r-plant"/></svg></button>
            <button aria-label="Home"><svg><use href="#r-home"/></svg></button>
            <button aria-label="Medical"><svg><use href="#r-aid"/></svg></button>
          </div>
          <div class="group">
            <button aria-label="Machines"><svg><use href="#r-press"/></svg></button>
            <button aria-label="Ventilation"><svg><use href="#r-fan"/></svg></button>
            <button aria-label="Steel stairs"><svg><use href="#r-stairb"/></svg></button>
          </div>
        </nav>
      </div>
    </aside>

    <main class="views">
      <div class="view plan">
        <svg class="scene" viewBox="366 31 932 518" preserveAspectRatio="xMinYMin slice" shape-rendering="crispEdges" aria-label="Plan view">
          <path d="M360 119.500h664.500V555H912.500V232.500H360z" fill="#cdcdcd" stroke="#000"/>
          <path d="M912.500 232.500l112-113" stroke="#000" shape-rendering="auto"/>
          <g stroke="#000" stroke-dasharray="1 1"><rect x="912.500" y="120.500" width="111" height="112" rx="7"/><rect x="918.500" y="126.500" width="100" height="99" rx="2"/></g>
        </svg>
        <div class="toolbar" role="toolbar" aria-label="Plan tools">
          <button aria-label="Pan"><svg><use href="#hand"/></svg></button><i></i>
          <button aria-label="Zoom"><svg><use href="#zoom"/></svg></button>
          <button aria-label="Zoom selection"><svg><use href="#zoomoff"/></svg></button>
          <button aria-label="Zoom previous"><svg><use href="#zoomback"/></svg></button>
          <button aria-label="Zoom fit"><svg><use href="#zoomfit"/></svg></button>
          <button aria-label="Overview"><svg><use href="#minimap"/></svg></button>
          <button aria-label="Zoom window"><svg><use href="#zoomwin"/></svg></button><i></i>
          <button aria-label="Center"><svg><use href="#target"/></svg></button><i></i>
          <button aria-label="Select box"><svg><use href="#selbox"/></svg></button>
          <button aria-label="Select lasso"><svg><use href="#sellasso"/></svg></button>
          <button aria-label="Select list"><svg><use href="#sellist"/></svg></button><i></i>
          <button aria-label="Move"><svg><use href="#scale2"/></svg></button>
          <button aria-label="Stretch"><svg><use href="#stretch"/></svg></button>
          <button aria-label="Rotate"><svg><use href="#rot"/></svg></button>
          <button aria-label="Align"><svg><use href="#rot2"/></svg></button><i></i>
          <button aria-label="Line"><svg><use href="#line"/></svg></button>
          <button aria-label="Guide"><svg><use href="#line2"/></svg></button>
          <button aria-label="Dimension value"><svg><use href="#dim3"/></svg></button>
          <button aria-label="Dimension"><svg><use href="#dim"/></svg></button><i></i>
          <button aria-label="Measure"><svg><use href="#ruler"/></svg></button>
          <button aria-label="Copy"><svg><use href="#copybox"/></svg></button>
          <button aria-label="Animate"><svg><use href="#film"/></svg></button>
          <button aria-label="Price"><svg><use href="#money"/></svg></button>
          <button aria-label="Explode"><svg><use href="#burst"/></svg></button>
        </div>
      </div>
      <div class="view model">
        <svg class="scene" viewBox="366 550 932 474" preserveAspectRatio="xMinYMin slice" aria-label="Model view">
          <path d="M465 768L690 687l235 17v5L700 742 465 774z" fill="url(#g-back)"/>
          <path d="M465 770L700 738l225-31v17L490 784h-25z" fill="url(#g-backlow)"/>
          <path d="M366 550h466l237 47q6 1 6 8v95H975L366 652z" fill="url(#g-front)"/>
          <path d="M832 550l237 47 5 5-5 1-267-53z" fill="url(#g-top)"/>
          <path d="M366 638l580 55 29 4-12 3-35 7L366 664z" fill="url(#g-under)"/>
          <path d="M924 708l51-11V1030h-51z" fill="url(#g-side)"/>
          <path d="M974 698l13-9v11h85V1030h-98z" fill="url(#g-post)"/>
          <path d="M1074.500 610v90" stroke="#aaa"/>
          <path d="M1043 648l-8 44M1046 648l-9 43" stroke="#fff" stroke-width="2" stroke-dasharray="2 1"/>
          <path d="M924 1030V845h1V652l50-14h15l82 13v47h-1v332" stroke="#dba83e" stroke-width="2"/>
          <path d="M1015.500 911v14l3-3 3 6 2-1-2-6h4z" fill="#6fb1df" stroke="#2c3a78"/>
          <path d="M1015.500 911v13" stroke="#f2e24e"/>
        </svg>
        <div class="toolbar" role="toolbar" aria-label="Model tools">
          <button aria-label="Pan"><svg><use href="#hand"/></svg></button><i></i>
          <button aria-label="Zoom"><svg><use href="#zoom"/></svg></button>
          <button aria-label="Zoom selection"><svg><use href="#zoomoff"/></svg></button>
          <button aria-label="Zoom fit"><svg><use href="#zoomfit"/></svg></button><i></i>
          <button aria-label="Orbit"><svg><use href="#orbit"/></svg></button>
          <button aria-label="Fit model"><svg><use href="#cubefit"/></svg></button>
          <button aria-label="Height"><svg><use href="#cubeh"/></svg></button><i></i>
          <button aria-label="Select box"><svg><use href="#selbox"/></svg></button>
          <button aria-label="Select list"><svg><use href="#sellist"/></svg></button><i></i>
          <button aria-label="Stretch"><svg><use href="#stretch"/></svg></button><i></i>
          <button aria-label="Measure"><svg><use href="#ruler"/></svg></button>
          <button aria-label="Copy"><svg><use href="#copybox"/></svg></button>
          <button aria-label="Explode"><svg><use href="#burst"/></svg></button><i></i>
          <button class="split" aria-label="Render"><svg><use href="#flash"/></svg><svg class="mini"><use href="#down"/></svg></button><i></i>
          <button aria-label="Center"><svg><use href="#target"/></svg></button>
        </div>
      </div>
      <nav class="sheets" aria-label="Layers">
        <button class="on">Normal</button><button>Sketch</button><button>Architectural</button><button>CAD</button><button>Tags</button><button>Colored Tags</button><button>All</button>
        <button class="more" aria-label="More"><b></b><b></b><b></b></button>
      </nav>
    </main>
  </div>
</div>
</body>
</html>
```
FILE: styles.css
```css
* { box-sizing: border-box; }
body { margin: 0; font: 12px/16px "Open Sans", "Noto Sans", sans-serif; color: #111; background: #fefefe; }
button, select { font: inherit; color: inherit; background: none; border: 0; padding: 0; margin: 0; }
button { display: flex; align-items: center; justify-content: center; white-space: nowrap; }
h1, h2, h3 { margin: 0; font-weight: 400; font-size: 12px; }
svg { display: block; flex: none; width: 20px; height: 20px; fill: none; stroke: #222; }
svg.mini { width: 10px; height: 10px; }
svg.big { width: 24px; height: 24px; }
svg.sprite { position: absolute; width: 0; height: 0; }

.app { display: flex; flex-direction: column; height: 100vh; border-top: 2px solid #e8d08a; }

.menubar { display: flex; align-items: center; height: 29px; flex: none; border-bottom: 1px solid #b4b4b8; }
.menus { display: flex; gap: 1px; margin: 0 2px 0 1px; }
.menus button { padding: 0 5px; }
.quick { display: flex; gap: 6px; align-items: center; height: 20px; padding: 0 9px; border-left: 1px solid #b4b4b4; }
.quick .split svg + svg { margin-left: 1px; }

.work { display: flex; flex: 1; min-height: 0; }
.side { display: flex; flex-direction: column; width: 366px; flex: none; background: #f5f5f4; border-right: 1px solid #aaa; }
.filter { display: flex; align-items: center; height: 29px; flex: none; padding-left: 4px; border-bottom: 1px solid #b4b4b8; }
.filter > button { width: 28px; flex: none; }
.filter > .collapse { width: 56px; }
.drop { position: relative; display: flex; align-items: center; height: 24px; border: 1px solid #a8a8a8; border-radius: 4px; background: #fefefe; }
.drop select { appearance: none; width: 100%; height: 100%; padding: 0 20px 0 3px; outline: 0; }
.drop .mini { position: absolute; right: 4px; pointer-events: none; }
.tabs-drop { width: 191px; flex: none; margin-right: 4px; }

.side-main { display: flex; flex: 1; min-height: 0; }
.panel { display: flex; flex-direction: column; flex: 1; min-width: 0; }
.panel-head { display: flex; align-items: center; gap: 8px; height: 49px; flex: none; padding: 8px 15px 0; background: #fefefe; border-bottom: 1px solid #b4b4b4; }
.panel-head h1 { flex: 1; font-size: 14px; line-height: 20px; }
.panel-body { position: relative; flex: 1; min-height: 0; overflow: hidden; }
.thumb { position: absolute; right: 3px; top: 11px; width: 2px; height: 79%; background: #8e8e8e; }
section { margin: 0 15px 0 13px; padding: 0 2px 16px; border-top: 1px solid #b0b0b0; }
section:first-child { border-top: 0; }
section.short { padding-bottom: 3px; }
.sec-head { display: flex; align-items: center; gap: 8px; height: 30px; margin-bottom: 1px; }
section:first-child .sec-head { height: 31px; margin-bottom: 0; }
.sec-head h2 { flex: 1; font-size: 13px; font-weight: 600; }
.sec-head > .mini { margin: 0 -1px 0 1px; }
h3 { margin: 12px 0 4px; }
h3.tight { margin: 4px 0; }
h3.loose { margin: 16px 0 4px; }
.cards { display: grid; grid-template-columns: repeat(4, 64px); gap: 8px; }
.card, .pairs button, .wide, .apply, .profile > button { background: #fefefe; border: 1px solid #e4e4e4; border-radius: 4px; font-family: "Noto Sans", sans-serif; font-size: 11px; }
.card { flex-direction: column; height: 64px; padding: 5px 3px 4px; justify-content: flex-start; white-space: normal; line-height: 13px; }
.card span { display: flex; align-items: center; flex: 1; padding: 0 2px; }
.pairs { display: grid; grid-template-columns: 1fr 1fr; gap: 8px; }
.pairs button { height: 28px; gap: 1px; }
.wide { width: 100%; height: 28px; }
.profile { display: flex; align-items: center; gap: 8px; }
.profile label { width: 34px; color: #555; }
.profile .drop { flex: 1; }
.profile .drop select { padding-left: 32px; }
.profile .star { position: absolute; left: 7px; width: 18px; height: 18px; pointer-events: none; }
.profile > button { width: 24px; height: 24px; }
.apply { flex-direction: column; justify-content: flex-start; gap: 8px; width: 88px; height: 120px; margin: 0 auto; padding-top: 3px; }
.tube { width: 80px; height: 80px; border: 1px solid #000; border-radius: 7px; background: #fefefe; box-shadow: inset 0 0 0 3px #cbcbcb, inset 0 0 0 4px #000; }
.panel-foot { height: 23px; flex: none; justify-content: flex-start; gap: 5px; padding-left: 5px; background: #fefefe; border-top: 1px solid #b4b4b4; }

.rail { width: 53px; flex: none; overflow: hidden; border-left: 1px solid #aaa; }
.group + .group { border-top: 1px solid #c8c8c8; }
.rail button { position: relative; width: 100%; height: 34px; }
.rail .compact { padding-top: 2px; }
.rail .compact button { height: 31px; }
.rail .on { background: #c9dbeb; }
.rail svg { width: 24px; height: 24px; }
.ai span { position: absolute; font-size: 10px; font-weight: 700; color: #fff; }

.views { display: flex; flex-direction: column; flex: 1; min-width: 0; }
.view { position: relative; min-height: 0; overflow: hidden; }
.plan { flex: 518; border-bottom: 1px solid #aaa; }
.model { flex: 474; }
.scene { position: absolute; inset: 0; width: 100%; height: 100%; stroke: none; }
.toolbar { position: absolute; left: 4px; top: 4px; display: flex; align-items: center; height: 32px; padding-right: 1px; background: #f5f5f4; border: 1px solid #b4b4b4; border-radius: 4px; }
.toolbar button { width: 29px; height: 28px; }
.toolbar .split { width: 41px; gap: 2px; }
.toolbar i { width: 1px; height: 20px; margin: 0 2px 0 3px; background: #b0b0b0; }
.model .toolbar { top: 5px; }

.sheets { display: flex; flex: none; height: 24px; border-top: 1px solid #aaa; }
.sheets button { padding: 0 12px 2px; border-top: 2px solid transparent; }
.sheets .on { background: #cddceb; border-top-color: #4a7ba3; }
.sheets .more { flex-direction: column; gap: 3px; padding: 0 10px; }
.more b { width: 3px; height: 3px; border-radius: 50%; background: #222; }
```
